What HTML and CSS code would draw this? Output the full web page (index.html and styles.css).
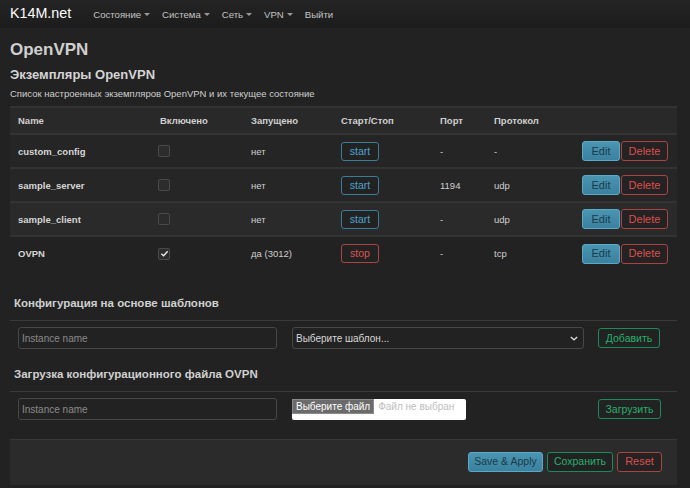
FILE: index.html
```html
<!DOCTYPE html>
<html lang="ru">
<head>
<meta charset="utf-8">
<title>OpenVPN</title>
<link rel="stylesheet" href="styles.css">
</head>
<body>
<header class="navbar">
  <a class="brand">K14M.net</a>
  <nav class="menu">
    <a class="menu-item">Состояние <span class="caret"></span></a>
    <a class="menu-item">Система <span class="caret"></span></a>
    <a class="menu-item">Сеть <span class="caret"></span></a>
    <a class="menu-item">VPN <span class="caret"></span></a>
    <a class="menu-item">Выйти</a>
  </nav>
</header>

<main class="content">
  <h2 class="page-title">OpenVPN</h2>
  <h3 class="section-title">Экземпляры OpenVPN</h3>
  <p class="section-desc">Список настроенных экземпляров OpenVPN и их текущее состояние</p>

  <table class="instances">
    <colgroup>
      <col class="c-name"><col class="c-en"><col class="c-run"><col class="c-ss"><col class="c-port"><col class="c-proto"><col>
    </colgroup>
    <thead>
      <tr><th>Name</th><th>Включено</th><th>Запущено</th><th>Старт/Стоп</th><th>Порт</th><th>Протокол</th><th></th></tr>
    </thead>
    <tbody>
      <tr class="r1">
        <td class="name">custom_config</td>
        <td><span class="cbox"></span></td>
        <td>нет</td>
        <td><button class="btn btn-start">start</button></td>
        <td>-</td>
        <td>-</td>
        <td class="actions"><button class="btn btn-edit">Edit</button><button class="btn btn-del">Delete</button></td>
      </tr>
      <tr class="r2">
        <td class="name">sample_server</td>
        <td><span class="cbox"></span></td>
        <td>нет</td>
        <td><button class="btn btn-start">start</button></td>
        <td>1194</td>
        <td>udp</td>
        <td class="actions"><button class="btn btn-edit">Edit</button><button class="btn btn-del">Delete</button></td>
      </tr>
      <tr class="r3">
        <td class="name">sample_client</td>
        <td><span class="cbox"></span></td>
        <td>нет</td>
        <td><button class="btn btn-start">start</button></td>
        <td>-</td>
        <td>udp</td>
        <td class="actions"><button class="btn btn-edit">Edit</button><button class="btn btn-del">Delete</button></td>
      </tr>
      <tr class="r4">
        <td class="name">OVPN</td>
        <td><span class="cbox checked"><svg viewBox="0 0 10 10" width="9" height="9"><path d="M1.5 5.2 L4 7.5 L8.5 2.5" fill="none" stroke="#e8e8e8" stroke-width="1.6"/></svg></span></td>
        <td>да (3012)</td>
        <td><button class="btn btn-stop">stop</button></td>
        <td>-</td>
        <td>tcp</td>
        <td class="actions"><button class="btn btn-edit">Edit</button><button class="btn btn-del">Delete</button></td>
      </tr>
    </tbody>
  </table>

  <section class="form-section first">
    <h4 class="form-title">Конфигурация на основе шаблонов</h4>
    <div class="form-row">
      <div class="field field-name"><span class="placeholder">Instance name</span></div>
      <div class="field field-select">
        <span>Выберите шаблон...</span>
        <svg class="chev" viewBox="0 0 10 6" width="8" height="5"><path d="M1 1 L5 4.6 L9 1" fill="none" stroke="#ddd" stroke-width="1.6"/></svg>
      </div>
      <button class="btn btn-green btn-add">Добавить</button>
    </div>
  </section>

  <section class="form-section second">
    <h4 class="form-title">Загрузка конфигурационного файла OVPN</h4>
    <div class="form-row">
      <div class="field field-name"><span class="placeholder">Instance name</span></div>
      <div class="file-input">
        <span class="file-btn">Выберите файл</span>
        <span class="file-none">Файл не выбран</span>
      </div>
      <button class="btn btn-green btn-upload">Загрузить</button>
    </div>
  </section>

  <footer class="actions-bar">
    <button class="btn btn-apply">Save &amp; Apply</button>
    <button class="btn btn-green btn-save">Сохранить</button>
    <button class="btn btn-del btn-reset">Reset</button>
  </footer>
</main>
</body>
</html>
```

FILE: styles.css
```css
* { box-sizing: border-box; }

html, body {
  margin: 0;
  padding: 0;
  background: #222222;
  color: #cfcfcf;
  font-family: "Liberation Sans", Arial, sans-serif;
  font-size: 9.5px;
}

.navbar {
  height: 28px;
  display: flex;
  align-items: center;
  padding: 0 10px;
  background: linear-gradient(#242424, #1c1c1c);
}

.brand {
  color: #ffffff;
  font-size: 14.3px;
  margin-right: 22px;
  position: relative;
  top: -1px;
}

.menu {
  display: flex;
}

.menu-item {
  color: #c4c4c4;
  font-size: 9.6px;
  margin-right: 12px;
  display: inline-flex;
  align-items: center;
}

.caret {
  display: inline-block;
  width: 0;
  height: 0;
  margin-left: 3px;
  border-left: 3px solid transparent;
  border-right: 3px solid transparent;
  border-top: 3px solid #9a9a9a;
}

.content {
  padding: 0 13px 0 10px;
}

.page-title {
  margin: 0;
  padding-top: 12px;
  font-size: 17px;
  font-weight: bold;
  color: #cfcfcf;
  line-height: 20px;
}

.section-title {
  margin: 7px 0 0;
  font-size: 13px;
  font-weight: bold;
  color: #d4d4d4;
  line-height: 16px;
}

.section-desc {
  margin: 5px 0 0;
  font-size: 9.5px;
  line-height: 12px;
  color: #cfcfcf;
}

.instances {
  width: 100%;
  margin-top: 6px;
  border-collapse: collapse;
  border-top: 2px solid #333;
}

.c-name { width: 142px; }
.c-en { width: 91px; }
.c-run { width: 90px; }
.c-ss { width: 99px; }
.c-port { width: 54px; }
.c-proto { width: 70px; }

.instances th {
  text-align: left;
  font-weight: bold;
  height: 27px;
  padding: 0 8px;
  background: #292929;
  color: #d0d0d0;
}

.instances td {
  height: 34px;
  padding: 0 8px;
  border-top: 2px solid #333;
  vertical-align: middle;
}

.instances .r1 td { background: #252525; }
.instances .r2 td { background: #262626; }
.instances .r3 td { background: #2a2a2a; }
.instances .r4 td { background: #222222; }

.instances td.name { font-weight: bold; color: #d6d6d6; }

.cbox {
  display: inline-flex;
  align-items: center;
  justify-content: center;
  width: 12px;
  height: 12px;
  border: 1px solid #4a4a4a;
  border-radius: 2px;
  background: #2c2c2c;
  margin-left: -2px;
  vertical-align: middle;
}

.actions {
  text-align: right;
  white-space: nowrap;
  padding-right: 9px !important;
}

.btn {
  font-family: "Liberation Sans", Arial, sans-serif;
  font-size: 10.5px;
  height: 19px;
  padding: 0 8px;
  border-radius: 3px;
  background: #222;
  cursor: pointer;
  line-height: 17px;
  vertical-align: middle;
}

.btn-start {
  border: 1px solid #3a7d9a;
  color: #4da3cc;
  width: 38px;
  padding: 0;
}

.btn-stop {
  border: 1px solid #a84444;
  color: #dd5252;
  width: 38px;
  padding: 0;
}

.btn-edit {
  height: 20px;
  width: 38px;
  padding: 0;
  border: 1px solid #5aa9c8;
  background: linear-gradient(#4a95b2, #3a819e);
  color: #1c3a48;
  font-size: 11px;
}

.btn-del {
  height: 20px;
  width: 47px;
  padding: 0;
  margin-left: 1px;
  border: 1px solid #a84444;
  background: #242222;
  color: #dd4f4f;
  font-size: 11px;
}

.form-section.first {
  margin-top: 25px;
}

.form-section.second {
  margin-top: 17px;
}

.form-title {
  margin: 0;
  padding: 0 4px 9px;
  font-size: 11.5px;
  font-weight: bold;
  color: #d0d0d0;
  line-height: 16px;
  border-bottom: 1px solid #3a3a3a;
}

.form-row {
  display: flex;
  align-items: center;
  padding: 6px 0 0 8px;
}

.field {
  height: 22px;
  border: 1px solid #474747;
  border-radius: 3px;
  background: #222;
  display: flex;
  align-items: center;
  padding: 0 3px;
  font-size: 10px;
}

.field-name {
  width: 259px;
}

.placeholder {
  color: #8a8a8a;
}

.field-select {
  width: 292px;
  margin-left: 15px;
  justify-content: space-between;
  color: #d8d8d8;
  padding-right: 5px;
}

.chev { display: block; }

.btn-green {
  border: 1px solid #1c8a5a;
  color: #27b06c;
  background: #222;
  height: 20px;
}

.btn-add {
  margin-left: 14px;
  width: 62px;
  padding: 0;
}

.file-input {
  margin-left: 15px;
  width: 174px;
  height: 21px;
  background: #ffffff;
  border-radius: 2px;
  display: flex;
  align-items: flex-start;
  font-size: 10px;
}

.file-btn {
  background: #6b6b6b;
  color: #ffffff;
  border: 1px solid #8a8a8a;
  height: 15px;
  line-height: 13px;
  padding: 0 3px;
}

.file-none {
  color: #bdbdbd;
  padding-left: 4px;
  line-height: 15px;
}

.btn-upload {
  margin-left: 132px;
  width: 63px;
  padding: 0;
}

.actions-bar {
  margin-top: 19px;
  height: 46px;
  background: #2b2b2b;
  border-top: 1px solid #383838;
  display: flex;
  justify-content: flex-end;
  align-items: center;
  gap: 4px;
  padding: 0 15px 2px 0;
}

.btn-apply {
  width: 75px;
  padding: 0;
  height: 20px;
  border: 1px solid #5aa9c8;
  background: linear-gradient(#4a95b2, #3a819e);
  color: #1c3a48;
}

.btn-save {
  width: 66px;
  padding: 0;
}

.btn-reset {
  width: 45px;
  margin-left: 0;
}
```
